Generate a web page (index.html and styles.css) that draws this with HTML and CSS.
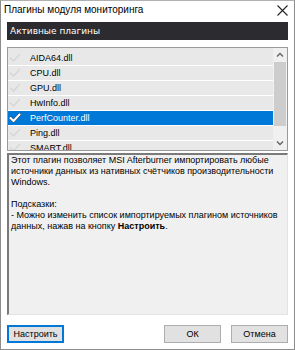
FILE: index.html
```html
<!DOCTYPE html>
<html>
<head>
    <title>Плагины модуля мониторинга</title>
    <link rel="stylesheet" href="styles.css">
</head>
<body>
    <div class="window">
        <div class="titlebar">
            <span class="title">Плагины модуля мониторинга</span>
            <svg class="close" width="11" height="11" viewBox="0 0 11 11">
                <path d="M0.5 0.5 L10.5 10.5 M10.5 0.5 L0.5 10.5" stroke="#222" stroke-width="1.1" fill="none"/>
            </svg>
        </div>

        <div class="content">
            <div class="section-head">Активные плагины</div>

            <div class="plugin-list">
                <div class="items">
                    <div class="item"><span class="check"></span>AIDA64.dll</div>
                    <div class="item"><span class="check"></span>CPU.dll</div>
                    <div class="item"><span class="check"></span>GPU.dll</div>
                    <div class="item"><span class="check"></span>HwInfo.dll</div>
                    <div class="item selected"><span class="check on"></span>PerfCounter.dll</div>
                    <div class="item"><span class="check"></span>Ping.dll</div>
                    <div class="item"><span class="check"></span>SMART.dll</div>
                </div>
                <div class="scrollbar">
                    <svg class="arrow" width="14" height="14" viewBox="0 0 14 14">
                        <path d="M4 8.5 L7 5.5 L10 8.5" stroke="#606060" stroke-width="1.3" fill="none"/>
                    </svg>
                    <div class="track"><div class="thumb"></div></div>
                    <svg class="arrow" width="14" height="14" viewBox="0 0 14 14">
                        <path d="M4 5.5 L7 8.5 L10 5.5" stroke="#606060" stroke-width="1.3" fill="none"/>
                    </svg>
                </div>
            </div>

            <div class="desc">
                <p>Этот плагин позволяет MSI Afterburner импортировать любые источники данных из нативных счётчиков производительности Windows.</p>
                <p>Подсказки:<br>- Можно изменить список импортируемых плагином источников данных, нажав на кнопку <b>Настроить</b>.</p>
            </div>

            <div class="buttons">
                <button class="btn focused">Настроить</button>
                <span class="spacer"></span>
                <button class="btn">ОК</button>
                <button class="btn">Отмена</button>
            </div>
        </div>
    </div>

    <script>
        // draw check marks into the list
        document.querySelectorAll('.check').forEach(function (el) {
            el.innerHTML = '<svg width="12" height="10" viewBox="0 0 12 10">' +
                '<path d="M1.5 5 L4.5 8 L10.5 1.5" stroke-linecap="round" stroke-linejoin="round" fill="none"/></svg>';
        });
    </script>
</body>
</html>
```

FILE: styles.css
```css
body {
    margin: 0;
    font-family: "Liberation Sans", sans-serif;
    background-color: #ffffff;
}
.window {
    width: 295px;
    height: 350px;
    box-sizing: border-box;
    border: 1px solid #8c8c8c;
    border-top-color: #b0b0b0;
    background-color: #ffffff;
    display: flex;
    flex-direction: column;
}
.titlebar {
    height: 21px;
    box-sizing: border-box;
    display: flex;
    align-items: flex-start;
    justify-content: space-between;
    padding: 3px 6px 0 3px;
}
.title {
    font-size: 10px;
    line-height: 12px;
    color: #000;
}
.close {
    display: block;
    margin-top: 1px;
}
.content {
    flex: 1;
    padding: 0 6px 6px 6px;
    display: flex;
    flex-direction: column;
}
.section-head {
    height: 18px;
    line-height: 18px;
    background-color: #2b2b30;
    color: #ffffff;
    font-family: "DejaVu Sans", sans-serif;
    font-size: 9px;
    padding-left: 3px;
}
.plugin-list {
    margin-top: 7px;
    height: 104px;
    box-sizing: border-box;
    border: 1px solid #9a9a9a;
    display: flex;
    background-color: #e8e8e8;
    overflow: hidden;
}
.items {
    flex: 1;
    padding-top: 3px;
}
.item {
    height: 14px;
    line-height: 14px;
    border-bottom: 1px solid #ffffff;
    font-size: 9px;
    color: #000;
    display: flex;
    align-items: center;
}
.item.selected {
    background-color: #0078d7;
    color: #ffffff;
}
.check {
    width: 21px;
    padding-left: 1px;
    display: flex;
    align-items: center;
}
.check svg path {
    stroke: #d4d4d4;
    stroke-width: 1.2;
}
.check.on svg path {
    stroke: #ffffff;
    stroke-width: 2.4;
}
.check.on svg {
    filter: drop-shadow(0 0 0.6px #000) drop-shadow(0 0 0.4px #000);
}
.scrollbar {
    width: 14px;
    display: flex;
    flex-direction: column;
    background-color: #f0f0f0;
}
.arrow {
    display: block;
}
.track {
    flex: 1;
    padding: 0 1px;
}
.thumb {
    height: 64px;
    background-color: #cdcdcd;
}
.desc {
    margin-top: 2px;
    height: 162px;
    box-sizing: border-box;
    background-color: #f0f0f0;
    border-top: 2px solid #7a7a7a;
    border-left: 2px solid #7a7a7a;
    border-right: 1px solid #e3e3e3;
    border-bottom: 1px solid #e3e3e3;
    padding: 0 2px;
    font-size: 9px;
    line-height: 11px;
    color: #000;
}
.desc p {
    margin: 0 0 11px 0;
}
.buttons {
    margin-top: auto;
    display: flex;
    gap: 10px;
}
.spacer {
    flex: 1;
}
.btn {
    width: 57px;
    height: 18px;
    padding: 0;
    font-family: "Liberation Sans", sans-serif;
    font-size: 9px;
    color: #000;
    background-color: #e1e1e1;
    border: 1px solid #adadad;
}
.btn.focused {
    border: 2px solid #0078d7;
}
```
